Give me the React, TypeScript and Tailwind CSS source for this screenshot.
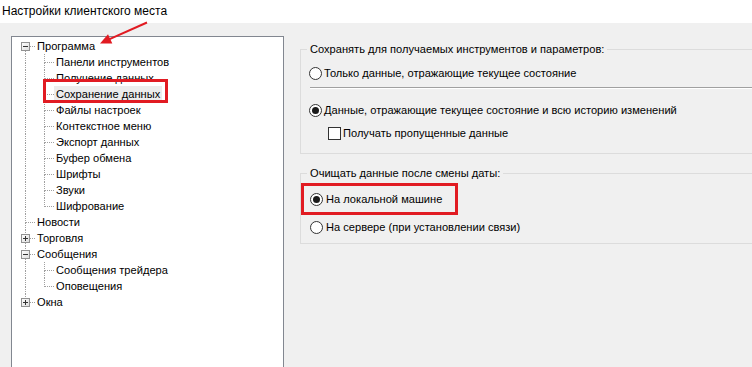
import React from "react";

type Row = {
  label: string;
  level: 0 | 1;
  box?: "plus" | "minus";
  rootTop: boolean;
  rootBottom: boolean;
  childBottom?: boolean;
  selected?: boolean;
};

const rows: Row[] = [
  { label: "Программа", level: 0, box: "minus", rootTop: false, rootBottom: true },
  { label: "Панели инструментов", level: 1, rootTop: true, rootBottom: true, childBottom: true },
  { label: "Получение данных", level: 1, rootTop: true, rootBottom: true, childBottom: true },
  { label: "Сохранение данных", level: 1, rootTop: true, rootBottom: true, childBottom: true, selected: true },
  { label: "Файлы настроек", level: 1, rootTop: true, rootBottom: true, childBottom: true },
  { label: "Контекстное меню", level: 1, rootTop: true, rootBottom: true, childBottom: true },
  { label: "Экспорт данных", level: 1, rootTop: true, rootBottom: true, childBottom: true },
  { label: "Буфер обмена", level: 1, rootTop: true, rootBottom: true, childBottom: true },
  { label: "Шрифты", level: 1, rootTop: true, rootBottom: true, childBottom: true },
  { label: "Звуки", level: 1, rootTop: true, rootBottom: true, childBottom: true },
  { label: "Шифрование", level: 1, rootTop: true, rootBottom: true, childBottom: false },
  { label: "Новости", level: 0, rootTop: true, rootBottom: true },
  { label: "Торговля", level: 0, box: "plus", rootTop: true, rootBottom: true },
  { label: "Сообщения", level: 0, box: "minus", rootTop: true, rootBottom: true },
  { label: "Сообщения трейдера", level: 1, rootTop: true, rootBottom: true, childBottom: true },
  { label: "Оповещения", level: 1, rootTop: true, rootBottom: true, childBottom: false },
  { label: "Окна", level: 0, box: "plus", rootTop: true, rootBottom: false },
];

const DOT = "#a0a0a0";

function Gutter({ row }: { row: Row }) {
  const w = row.level === 0 ? 23 : 42;
  const rx = 13.5;
  const cx = 32.5;
  const cy = 8.5;
  const hasBox = !!row.box;
  return (
    <svg width={w} height={16} className="shrink-0 block" shapeRendering="crispEdges">
      {row.rootTop && (
        <line x1={rx} y1={0} x2={rx} y2={hasBox ? 4 : cy} stroke={DOT} strokeDasharray="1 1" />
      )}
      {row.rootBottom && (
        <line x1={rx} y1={hasBox ? 13 : cy} x2={rx} y2={16} stroke={DOT} strokeDasharray="1 1" />
      )}
      {row.level === 0 && (
        <line x1={hasBox ? 18 : rx} y1={cy} x2={23} y2={cy} stroke={DOT} strokeDasharray="1 1" />
      )}
      {row.level === 1 && (
        <>
          <line x1={cx} y1={0} x2={cx} y2={cy} stroke={DOT} strokeDasharray="1 1" />
          {row.childBottom && (
            <line x1={cx} y1={cy} x2={cx} y2={16} stroke={DOT} strokeDasharray="1 1" />
          )}
          <line x1={cx} y1={cy} x2={42} y2={cy} stroke={DOT} strokeDasharray="1 1" />
        </>
      )}
      {hasBox && (
        <>
          <defs>
            <linearGradient id="bx" x1="0" y1="0" x2="1" y2="1">
              <stop offset="0" stopColor="#ffffff" />
              <stop offset="1" stopColor="#dcdcdc" />
            </linearGradient>
          </defs>
          <rect x={9.5} y={4.5} width={8} height={8} fill="url(#bx)" stroke="#919191" />
          <line x1={11} y1={cy} x2={16} y2={cy} stroke="#333333" />
          {row.box === "plus" && <line x1={13.5} y1={6} x2={13.5} y2={11} stroke="#333333" />}
        </>
      )}
    </svg>
  );
}

function Radio({ checked }: { checked?: boolean }) {
  return (
    <span className="w-[13px] h-[13px] rounded-full border border-[#333333] bg-white flex items-center justify-center shrink-0">
      {checked && <span className="w-[7px] h-[7px] rounded-full bg-[#1a1a1a]" />}
    </span>
  );
}

export default function App() {
  const font = { fontFamily: '"Liberation Sans", Arial, sans-serif' };
  return (
    <div
      className="relative w-[752px] h-[367px] overflow-hidden bg-[#f0f0f0] text-black text-[11.1px] flex flex-col"
      style={font}
    >
      <div className="h-[23px] bg-white pl-[2px] leading-[22px] text-[12px] shrink-0">
        Настройки клиентского места
      </div>
      <div className="flex flex-1">
        <div className="ml-[11px] mt-[13px] w-[273px] h-[340px] shrink-0 border border-[#828790] bg-white pt-[1px]">
          {rows.map((r) => (
            <div key={r.label} className="flex items-center h-[16px]">
              <Gutter row={r} />
              <span
                className={
                  "px-[2px] leading-[16px] whitespace-nowrap " + (r.selected ? "bg-[#ececec]" : "")
                }
              >
                {r.label}
              </span>
            </div>
          ))}
        </div>
        <div className="ml-[16px] pt-[18px] flex flex-col">
          <fieldset className="w-[480px] border border-[#dcdcdc] pt-[8px] pb-[12px]">
            <legend className="ml-[6px] px-[3px] leading-[16px]">
              Сохранять для получаемых инструментов и параметров:
            </legend>
            <div className="flex items-center h-[16px] ml-[8px] gap-[2px]">
              <Radio />
              <span>Только данные, отражающие текущее состояние</span>
            </div>
            <div className="ml-[9px] mt-[6px] border-t border-t-[#a0a0a0] border-b border-b-white" />
            <div className="flex items-center h-[16px] ml-[8px] gap-[2px] mt-[13px]">
              <Radio checked />
              <span>Данные, отражающие текущее состояние и всю историю изменений</span>
            </div>
            <div className="flex items-center h-[16px] ml-[27px] gap-[2px] mt-[7px]">
              <span className="w-[13px] h-[13px] border border-[#333333] bg-white shrink-0" />
              <span>Получать пропущенные данные</span>
            </div>
          </fieldset>
          <fieldset className="w-[480px] mt-[11px] border border-[#dcdcdc] pt-[10px] pb-[8px]">
            <legend className="ml-[6px] px-[3px] leading-[16px]">
              Очищать данные после смены даты:
            </legend>
            <div className="flex items-center h-[16px] ml-[9px] gap-[3px]">
              <Radio checked />
              <span>На локальной машине</span>
            </div>
            <div className="flex items-center h-[16px] ml-[9px] gap-[3px] mt-[12px]">
              <Radio />
              <span>На сервере (при установлении связи)</span>
            </div>
          </fieldset>
        </div>
      </div>

      {/* annotations */}
      <div className="absolute left-[43px] top-[79px] w-[125px] h-[24px] border-[3px] border-[#e11b22]" />
      <div className="absolute left-[301px] top-[183px] w-[157px] h-[32px] border-[3px] border-[#e11b22]" />
      <svg className="absolute left-0 top-0" width={160} height={50}>
        <line x1={147} y1={22.5} x2={109} y2={39.3} stroke="#e11b22" strokeWidth={2} />
        <polygon points="100,43.5 112.3,43.6 108,34.2" fill="#e11b22" />
      </svg>
    </div>
  );
}
